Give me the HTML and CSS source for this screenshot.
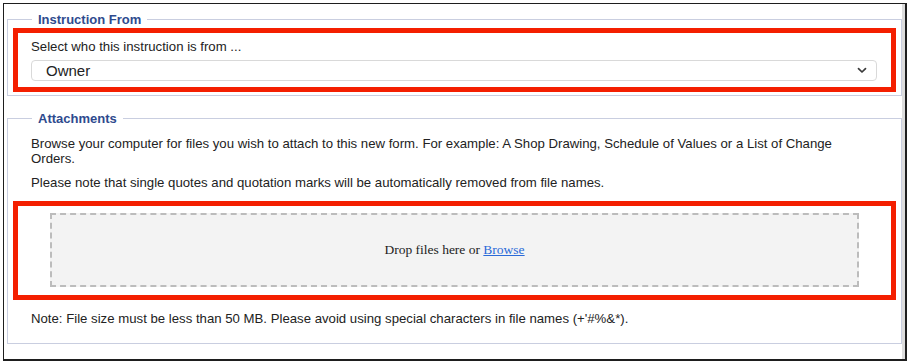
FILE: index.html
```html
<!DOCTYPE html>
<html>
<head>
<meta charset="utf-8">
<link rel="stylesheet" href="styles.css">
</head>
<body>
<div class="frame">
  <fieldset class="group group-first">
    <legend class="group-title">Instruction From</legend>
    <div class="highlight highlight-select">
      <div class="field-label">Select who this instruction is from ...</div>
      <div class="select-box">
        <span class="select-value">Owner</span>
        <svg class="chevron" width="10" height="7" viewBox="0 0 10 7"><path d="M1.5 1.6 L5 5 L8.5 1.6" fill="none" stroke="#3a3a3a" stroke-width="1.7" stroke-linecap="round" stroke-linejoin="round"/></svg>
      </div>
    </div>
  </fieldset>
  <fieldset class="group group-second">
    <legend class="group-title">Attachments</legend>
    <p class="para para-browse">Browse your computer for files you wish to attach to this new form. For example: A Shop Drawing, Schedule of Values or a List of Change Orders.</p>
    <p class="para para-note">Please note that single quotes and quotation marks will be automatically removed from file names.</p>
    <div class="highlight highlight-drop">
      <div class="dropzone">Drop files here or&nbsp;<a class="browse-link" href="#">Browse</a></div>
    </div>
    <p class="para para-size">Note: File size must be less than 50 MB. Please avoid using special characters in file names (+'#%&amp;*).</p>
  </fieldset>
</div>
</body>
</html>
```
FILE: styles.css
```css
html, body {
  margin: 0;
  padding: 0;
  background: #fff;
}
body {
  font-family: "Liberation Sans", Arial, sans-serif;
  font-size: 13.2px;
  color: #222;
  padding: 3px 0 0 3px;
}
.frame {
  width: 901px;
  height: 355px;
  border: 1px solid #1e1e1e;
  border-right-width: 2px;
  border-bottom-width: 2px;
  box-shadow: inset -3px 0 0 #dcdcdc;
  box-sizing: content-box;
}
.group {
  margin: 8px 3px 0 3px;
  padding: 0 5px;
  border: 1px solid #c9cee0;
  min-width: 0;
}
.group-title {
  margin-left: 19px;
  padding: 0 6px;
  font-weight: bold;
  font-size: 13px;
  line-height: 15px;
  color: #2e4a8e;
}
.group-first {
  padding-top: 1px;
  padding-bottom: 3px;
}
.group-second {
  margin-top: 15px;
  padding-top: 10px;
  padding-bottom: 17px;
}
.highlight {
  border: 5px solid #f41f00;
}
.highlight-select {
  padding: 6px 14px 6px 13px;
}
.field-label {
  line-height: 16px;
  margin-bottom: 5px;
}
.select-box {
  display: flex;
  align-items: center;
  justify-content: space-between;
  height: 21px;
  border: 1px solid #d9d9d9;
  border-radius: 4px;
  padding: 0 9px 0 14px;
  box-sizing: border-box;
  background: #fff;
}
.select-value {
  font-size: 15px;
  color: #222;
}
.para {
  margin: 0 0 0 18px;
  padding-right: 20px;
  line-height: 15px;
}
.para-note {
  margin-top: 9px;
}
.highlight-drop {
  margin-top: 11px;
  padding: 7px 32px 8px 32px;
}
.dropzone {
  height: 74px;
  display: flex;
  align-items: center;
  justify-content: center;
  background: #f3f3f3;
  border: 2px dashed #bcbcbc;
  box-sizing: border-box;
  font-family: "Liberation Serif", "Times New Roman", serif;
  font-size: 13.5px;
  color: #222;
}
.browse-link {
  color: #2a6ad8;
  text-decoration: underline;
}
.para-size {
  margin-top: 11px;
}
```
